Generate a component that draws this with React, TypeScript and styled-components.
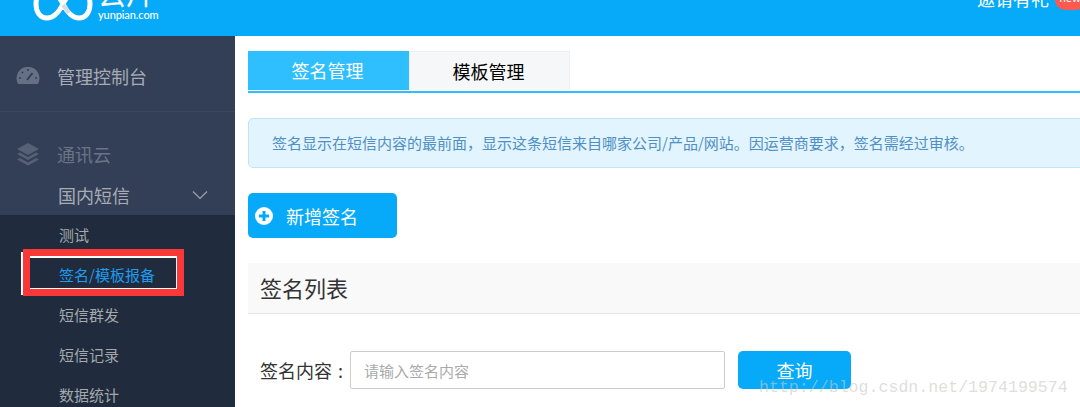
import styled, { createGlobalStyle } from 'styled-components'

const subItems = ['测试', '签名/模板报备', '短信群发', '短信记录', '数据统计']

const GlobalStyle = createGlobalStyle`
  html, body {
    margin: 0;
    height: 100%;
    overflow: hidden;
    background: #fff;
  }
  body {
    font-family: "Noto Sans CJK SC", "Liberation Sans", sans-serif;
  }
`

export default function App() {
  return (
    <Page>
      <GlobalStyle />
      <Header>
        <LogoWrap>
          <svg width="60" height="36" viewBox="0 0 60 36">
            <path
              d="M30 19 C25 9 20 5 14 5 C7 5 3 11 3 19 C3 27 7 33 14 33 C20 33 25 29 30 19 C35 9 40 5 46 5 C53 5 57 11 57 19 C57 27 53 33 46 33 C40 33 35 29 30 19 Z"
              fill="none"
              stroke="#fff"
              strokeWidth="5"
            />
            <path d="M30 20 L36 28" stroke="#d5dde5" strokeWidth="4" />
          </svg>
          <LogoText>
            <LogoName>云片</LogoName>
            <LogoDomain>yunpian.com</LogoDomain>
          </LogoText>
        </LogoWrap>
        <Invite>
          <InviteText>邀请有礼</InviteText>
          <Badge>new</Badge>
        </Invite>
      </Header>

      <Body>
        <Sidebar>
          <MenuGroup>
            <TopItem>
              <IconSlot>
                <svg width="24" height="18" viewBox="0 0 24 18">
                  <path d="M2 17 A11.500 11.500 0 1 1 22 17 Z" fill="#667084" />
                  <path d="M11 13 L16.500 6" stroke="#333f57" strokeWidth="2" />
                  <circle cx="4" cy="11" r="1" fill="#333f57" />
                  <circle cx="6.500" cy="5.500" r="1" fill="#333f57" />
                  <circle cx="12" cy="3" r="1" fill="#333f57" />
                  <circle cx="20" cy="11" r="1" fill="#333f57" />
                </svg>
              </IconSlot>
              <TopLabel>管理控制台</TopLabel>
            </TopItem>
          </MenuGroup>

          <CloudGroup>
            <TopItem>
              <IconSlot>
                <svg width="24" height="24" viewBox="0 0 24 24">
                  <path d="M12 1 L23 7 L12 13 L1 7 Z" fill="#566176" />
                  <path d="M1 12 L4 10.500 L12 15 L20 10.500 L23 12 L12 18 Z" fill="#566176" />
                  <path d="M1 17.500 L4 16 L12 20.500 L20 16 L23 17.500 L12 23.500 Z" fill="#566176" />
                </svg>
              </IconSlot>
              <TopLabel $dim>通讯云</TopLabel>
            </TopItem>
            <SubHead>
              <SubHeadLabel>国内短信</SubHeadLabel>
              <svg width="16" height="10" viewBox="0 0 16 10">
                <path d="M1 1.500 L8 8.500 L15 1.500" fill="none" stroke="#9aa3b0" strokeWidth="1.200" />
              </svg>
            </SubHead>
          </CloudGroup>

          <SubMenu>
            {subItems.map((item, i) => (
              <SubItem key={item} $active={i === 1}>
                {item}
              </SubItem>
            ))}
          </SubMenu>
        </Sidebar>

        <Main>
          <Tabs>
            <Tab $active>签名管理</Tab>
            <Tab>模板管理</Tab>
          </Tabs>

          <Notice>
            签名显示在短信内容的最前面，显示这条短信来自哪家公司/产品/网站。因运营商要求，签名需经过审核。
          </Notice>

          <AddButton>
            <svg width="18" height="18" viewBox="0 0 18 18">
              <circle cx="9" cy="9" r="9" fill="#fff" />
              <path d="M9 4 V14 M4 9 H14" stroke="#06aaf8" strokeWidth="3" />
            </svg>
            新增签名
          </AddButton>

          <SectionTitle>签名列表</SectionTitle>

          <SearchRow>
            <FieldLabel>签名内容 :</FieldLabel>
            <SearchInput placeholder="请输入签名内容" readOnly />
            <QueryButton>查询</QueryButton>
          </SearchRow>
        </Main>
      </Body>

      <WhiteStrip />
      <RedMark />
      <Watermark>http://blog.csdn.net/1974199574</Watermark>
    </Page>
  )
}

const Page = styled('div')`
  position: relative;
  width: 1080px;
  height: 407px;
  overflow: hidden;
`

const Header = styled('header')`
  height: 36px;
  background-color: #06aaf8;
  display: flex;
  justify-content: space-between;
  align-items: flex-end;
  padding-left: 33px;
  overflow: hidden;
  color: #fff;
`

const LogoWrap = styled('div')`
  display: flex;
  align-items: flex-end;
  gap: 5px;
  height: 36px;

  svg {
    margin-bottom: 15px;
    flex: none;
  }
`

const LogoText = styled('div')`
  display: flex;
  flex-direction: column;
  align-items: flex-start;
  margin-bottom: 15px;
`

const LogoName = styled('div')`
  font-size: 28px;
  line-height: 28px;
`

const LogoDomain = styled('div')`
  font-family: Lato, "Liberation Sans", sans-serif;
  font-size: 11px;
  font-weight: 500;
  line-height: 12px;
  margin-top: 2px;
  letter-spacing: -0.1px;
`

const Invite = styled('div')`
  display: flex;
  align-items: flex-end;
  gap: 6px;
  margin-right: -5px;
  margin-bottom: 33px;
`

const InviteText = styled('span')`
  font-size: 18px;
  line-height: 18px;
  margin-bottom: -4px;
`

const Badge = styled('span')`
  width: 30px;
  height: 20px;
  border-radius: 10px;
  background-color: #fb5a50;
  font-size: 11px;
  line-height: 14px;
  text-align: center;
  margin-bottom: -7px;
`

const Body = styled('div')`
  display: flex;
  height: 371px;
`

const Sidebar = styled('aside')`
  width: 235px;
  flex: none;
  background-color: #333f57;
  display: flex;
  flex-direction: column;
`

const MenuGroup = styled('div')`
  flex: none;
  height: 70px;
  padding-top: 5px;
  border-bottom: 1px solid #3d495f;
  display: flex;
  align-items: center;
`

const CloudGroup = styled('div')`
  flex: none;
  padding-top: 23px;
`

const TopItem = styled('div')`
  display: flex;
  align-items: center;
  height: 38px;
  padding-left: 16px;
`

const IconSlot = styled('span')`
  width: 41px;
  display: flex;
  align-items: center;
`

const TopLabel = styled('span')<{ $dim?: boolean }>`
  font-size: 18px;
  color: ${(p) => (p.$dim ? '#6a7486' : '#a6acb6')};
`

const SubHead = styled('div')`
  display: flex;
  align-items: center;
  justify-content: space-between;
  height: 40px;
  padding: 0 27px 0 58px;
  margin-top: 2px;
`

const SubHeadLabel = styled('span')`
  font-size: 18px;
  color: #a6acb6;
`

const SubMenu = styled('ul')`
  flex: none;
  height: 200px;
  list-style: none;
  margin: 0;
  padding: 0;
  background-color: #202c3d;
`

const SubItem = styled('li')<{ $active?: boolean }>`
  height: 40px;
  line-height: 40px;
  padding-left: 59px;
  font-size: 15px;
  color: ${(p) => (p.$active ? '#1e9bf0' : '#a3a8ad')};
`

const Main = styled('main')`
  flex: 1;
  min-width: 0;
  padding: 15px 0 0 13px;
  margin-right: -40px;
`

const Tabs = styled('div')`
  display: flex;
  height: 40px;
  border-bottom: 2px solid #2fbfff;
`

const Tab = styled('div')<{ $active?: boolean }>`
  width: 161px;
  height: 39px;
  text-align: center;
  line-height: 39px;
  font-size: 18px;
  box-sizing: border-box;
  padding-right: 2px;
  background-color: ${(p) => (p.$active ? '#2fbfff' : '#f6f7f9')};
  color: ${(p) => (p.$active ? '#fff' : '#000')};
  border: ${(p) => (p.$active ? 'none' : '1px solid #eff0f2')};
  border-bottom: none;
`

const Notice = styled('div')`
  height: 50px;
  box-sizing: border-box;
  margin-top: 25px;
  padding-left: 23px;
  line-height: 48px;
  font-size: 15px;
  white-space: nowrap;
  color: #4f8fc4;
  background-color: #e2f4fd;
  border: 1px solid #bfe6f0;
  border-radius: 5px;
`

const AddButton = styled('button')`
  display: flex;
  align-items: center;
  gap: 13px;
  width: 149px;
  height: 45px;
  margin-top: 25px;
  padding: 0 0 0 7px;
  border: none;
  border-radius: 5px;
  background-color: #06aaf8;
  color: #fff;
  font-family: inherit;
  font-size: 18px;
`

const SectionTitle = styled('h2')`
  height: 51px;
  box-sizing: border-box;
  margin: 25px 0 0;
  padding-left: 12px;
  line-height: 49px;
  font-size: 22px;
  font-weight: 400;
  color: #333;
  background-color: #f9f9f9;
  border-bottom: 1px solid #e5e5e5;
`

const SearchRow = styled('div')`
  display: flex;
  align-items: center;
  height: 38px;
  margin-top: 37px;
  padding-left: 12px;
`

const FieldLabel = styled('label')`
  width: 90px;
  flex: none;
  font-size: 18px;
  word-spacing: 2px;
  color: #333;
  white-space: nowrap;
`

const SearchInput = styled('input')`
  width: 375px;
  height: 38px;
  box-sizing: border-box;
  padding: 0 13px;
  border: 1px solid #ccc;
  border-radius: 2px;
  outline: none;
  font-family: inherit;
  font-size: 15px;

  &::placeholder {
    color: #aaa;
  }
`

const QueryButton = styled('button')`
  width: 113px;
  height: 38px;
  margin-left: 13px;
  border: none;
  border-radius: 5px;
  background-color: #06aaf8;
  color: #fff;
  font-family: inherit;
  font-size: 18px;
`

// annotation drawn over the screenshot
const RedMark = styled('div')`
  position: absolute;
  left: 23px;
  top: 249px;
  width: 161px;
  height: 47px;
  box-sizing: border-box;
  border: 7px solid #fb3838;

  &::after {
    content: '';
    position: absolute;
    inset: 0;
    border-style: solid;
    border-color: #fff;
    border-width: 2px 1px 1px 0;
  }
`

const WhiteStrip = styled('div')`
  position: absolute;
  left: 21px;
  top: 252px;
  width: 2px;
  height: 43px;
  background-color: #fff;
`

const Watermark = styled('div')`
  position: absolute;
  left: 759px;
  top: 378px;
  font-family: "Liberation Mono", monospace;
  font-size: 16.600px;
  line-height: 20px;
  white-space: nowrap;
  color: rgba(200, 200, 195, 0.6);
`
